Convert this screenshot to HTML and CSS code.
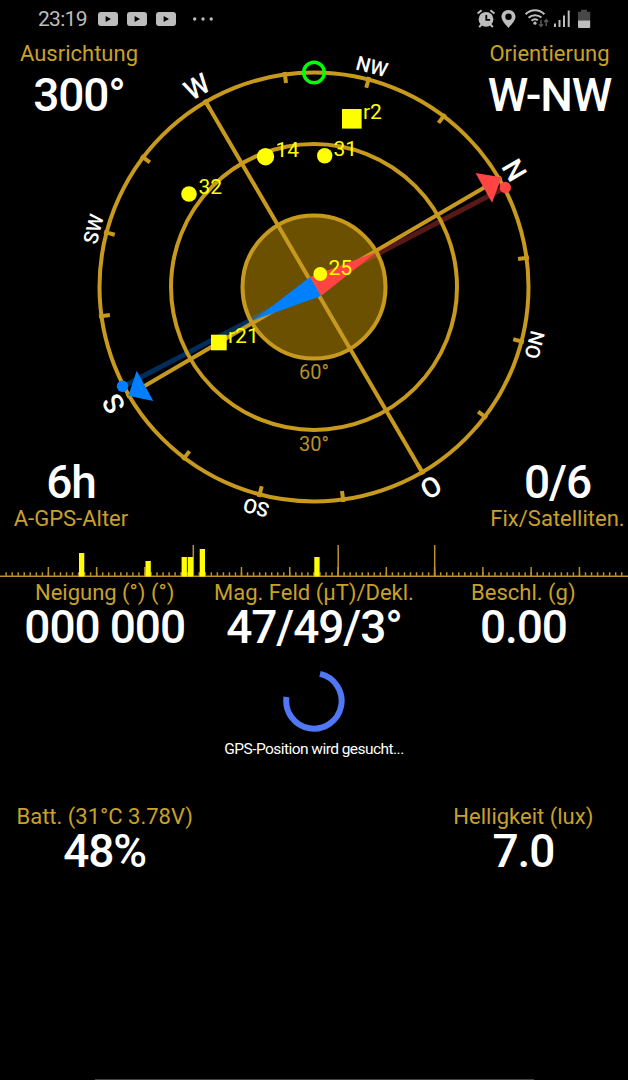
FILE: index.html
```html
<!DOCTYPE html>
<html lang="de">
<head>
    <meta charset="UTF-8">
    <meta name="viewport" content="width=device-width, initial-scale=1.0">
    <title>GPS Status</title>
    <link rel="stylesheet" href="styles.css">
</head>
<body>
    <header class="status-bar">
        <span class="clock">23:19</span>
        <div class="notifications">
            <svg class="video" viewBox="0 0 20 14"><rect width="20" height="14" rx="3"/><path class="cut" d="M7.6 4v6l5.4-3z"/></svg>
            <svg class="video" viewBox="0 0 20 14"><rect width="20" height="14" rx="3"/><path class="cut" d="M7.6 4v6l5.4-3z"/></svg>
            <svg class="video" viewBox="0 0 20 14"><rect width="20" height="14" rx="3"/><path class="cut" d="M7.6 4v6l5.4-3z"/></svg>
            <svg class="more" viewBox="0 0 20 4"><circle cx="1.7" cy="2" r="1.7"/><circle cx="10" cy="2" r="1.7"/><circle cx="18.2" cy="2" r="1.7"/></svg>
        </div>
        <svg class="system" viewBox="476 8 116 22">
            <!-- alarm -->
            <circle cx="486" cy="19.3" r="7.4"/>
            <path class="line" d="M477.6 13.6l4-3.4M494.4 13.6l-4-3.4"/>
            <path class="line" d="M481.5 24.5l-2.3 2.7M490.5 24.5l2.3 2.7"/>
            <path class="line cut-line" d="M486.3 15v4.8h3.8"/>
            <!-- location -->
            <path fill-rule="evenodd" d="M508.5 10c-4.2 0-7 3-7 6.8 0 4.3 4.6 8 7 11.2 2.4-3.2 7-6.9 7-11.2 0-3.8-2.8-6.8-7-6.8zm0 3.6a3.2 3.2 0 1 1 0 6.4 3.2 3.2 0 0 1 0-6.4z"/>
            <!-- wifi -->
            <path class="line" d="M525.6 14.3c5.3-5.300 13.500-5.300 18.800 0M528.600 17.800c3.600-3.500 9.200-3.500 12.800-.3M531.600 20.700c2-1.800 4.400-1.800 6.200-.4"/>
            <circle cx="535" cy="23.2" r="1.6"/>
            <path class="traffic" d="M541 20v6.3M539 24.2l2 2.2 2-2.2M546.2 26v-6.300M544.200 21.900l2-2.200 2 2.200"/>
            <!-- signal -->
            <path d="M554 23.5h2v3.500h-2zM558.500 20h2v7h-2zM563 15.500h2v11.500h-2zM567.700 10.500h2v16.500h-2z"/>
            <!-- battery -->
            <path class="empty" d="M581 9.700h6v2h3.200v9h-12.200v-9h3z"/>
            <path d="M578 20.500h12.200v6.500q0 1-1 1h-10.200q-1 0-1-1z"/>
        </svg>
    </header>

    <main>
        <section class="sky">
            <svg class="compass" viewBox="0 38 628 500">
                <g transform="translate(314 287)">
                    <circle class="zenith" r="71.5"/>
                    <path class="axis" d="M0-216V216M-216 0H216" transform="rotate(59.7)"/>
                    <!-- magnetic north / south -->
                    <path class="mag north-line" d="M0 0L191-99.5"/>
                    <path class="mag south-line" d="M0 0L-191 99.5"/>
                    <circle class="ring" r="71.5"/>
                    <circle class="ring" r="143"/>
                    <circle class="ring" r="214.5"/>
                    <g class="ticks" transform="rotate(59.7)">
                        <path d="M0-217v11M0 217v-11M-217 0h11M217 0h-11"/>
                        <path transform="rotate(22.5)" d="M0-217v11M0 217v-11M-217 0h11M217 0h-11"/>
                        <path transform="rotate(45)" d="M0-217v11M0 217v-11M-217 0h11M217 0h-11"/>
                        <path transform="rotate(67.5)" d="M0-217v11M0 217v-11M-217 0h11M217 0h-11"/>
                    </g>
                    <g class="cardinal">
                        <text transform="rotate(59.7)" y="-222">N</text>
                        <text transform="rotate(149.7)" y="-222">O</text>
                        <text transform="rotate(239.7)" y="-222">S</text>
                        <text transform="rotate(329.7)" y="-222">W</text>
                    </g>
                    <g class="intercardinal">
                        <text transform="rotate(104.7)" y="-221">NO</text>
                        <text transform="rotate(194.7)" y="-221">SO</text>
                        <text transform="rotate(284.7)" y="-221">SW</text>
                        <text transform="rotate(14.7)" y="-221">NW</text>
                    </g>
                    <text class="elevation" y="92">60°</text>
                    <text class="elevation" y="163.5">30°</text>
                    <path class="north" d="M-4-10L7 9 62.5-35z"/>
                    <path class="south" d="M-4-10L7 9-60 33z"/>
                    <path class="north" d="M161.5-114l26.2 4.3-9.7 25.4z"/>
                    <path class="south" d="M-177.3 83.7l16.6 30.3-25-5.3z"/>
                    <circle class="north" cx="191.3" cy="-99.5" r="5.7"/>
                    <circle class="south" cx="-191.5" cy="99.3" r="5.7"/>
                    <circle class="heading" cy="-214.5" r="10.3"/>
                </g>
                <g class="satellites">
                    <rect x="342" y="109" width="19.6" height="19.6"/><text x="363" y="118.5">r2</text>
                    <circle cx="265.5" cy="156.7" r="8.7"/><text x="275.5" y="157">14</text>
                    <circle cx="324.7" cy="155.7" r="7.7"/><text x="333.5" y="156">31</text>
                    <circle cx="189" cy="194" r="7.8"/><text x="198.5" y="194.3">32</text>
                    <circle cx="320.3" cy="274" r="6.9"/><text x="328.5" y="274.5">25</text>
                    <rect x="211" y="334.7" width="15.7" height="15.6"/><text x="228" y="342.8">r21</text>
                </g>
            </svg>
            <div class="readout corner-heading">
                <span class="label">Ausrichtung</span>
                <span class="value">300°</span>
            </div>
            <div class="readout corner-orientation">
                <span class="label">Orientierung</span>
                <span class="value">W-NW</span>
            </div>
            <div class="readout corner-age">
                <span class="value">6h</span>
                <span class="label">A-GPS-Alter</span>
            </div>
            <div class="readout corner-fix">
                <span class="value">0/6</span>
                <span class="label">Fix/Satelliten.</span>
            </div>
        </section>

        <svg class="signals" viewBox="0 538 628 41">
            <path class="minor" d="M5.4 574H625"/>
            <path class="major" d="M47.6 571.5H625"/>
            <path class="marker" d="M193.3 545v31M338.2 545v31M434.7 545v31"/>
            <path class="base" d="M0 576.2H628"/>
            <path class="bars" d="M79 553h5.3v23.5H79zM145.500 561h5.300v15.500h-5.300zM181.600 557h5.300v19.500h-5.300zM187.700 557h5.300v19.500h-5.300zM199.700 549h5.300v27.500h-5.300zM314.300 557h5.300v19.500h-5.300z"/>
        </svg>

        <section class="row">
            <div class="readout">
                <span class="label">Neigung (°) (°)</span>
                <span class="value">000 000</span>
            </div>
            <div class="readout">
                <span class="label">Mag. Feld (µT)/Dekl.</span>
                <span class="value">47/49/3°</span>
            </div>
            <div class="readout">
                <span class="label">Beschl. (g)</span>
                <span class="value">0.00</span>
            </div>
        </section>

        <section class="searching">
            <svg class="spinner" viewBox="0 0 62 62"><path d="M37 3.9A27.700 27.700 0 1 1 3.500 27"/></svg>
            <p>GPS-Position wird gesucht...</p>
        </section>

        <section class="row">
            <div class="readout">
                <span class="label">Batt. (31°C 3.78V)</span>
                <span class="value">48%</span>
            </div>
            <div></div>
            <div class="readout">
                <span class="label">Helligkeit (lux)</span>
                <span class="value">7.0</span>
            </div>
        </section>
    </main>
    <footer class="gesture-line"></footer>
</body>
</html>
```
FILE: styles.css
```css
* {
    box-sizing: border-box;
}
body {
    display: flex;
    flex-direction: column;
    height: 1080px;
    margin: 0;
    overflow: hidden;
    background: #000;
    color: #fff;
    font-family: Roboto, sans-serif;
}
main {
    flex: 1;
}
svg {
    display: block;
}

/* status bar */
.status-bar {
    display: flex;
    align-items: center;
    height: 38px;
    padding: 0 36px 0 38px;
    color: #bdbdbd;
    fill: #bdbdbd;
}
.clock {
    width: 60px;
    font-size: 21px;
    letter-spacing: -0.7px;
}
.notifications {
    display: flex;
    align-items: center;
    gap: 9px;
    flex: 1;
}
.video {
    width: 20px;
    height: 14px;
}
.more {
    width: 20px;
    height: 4px;
    margin-left: 8px;
}
.cut {
    fill: #000;
}
.system {
    width: 116px;
    height: 22px;
}
.line {
    fill: none;
    stroke: #bdbdbd;
    stroke-width: 2;
}
.cut-line {
    stroke: #000;
    stroke-width: 1.8;
}
.traffic {
    fill: none;
    stroke: #555;
    stroke-width: 1.5;
}
.empty {
    fill: #484848;
}

/* readouts */
.readout {
    display: flex;
    flex-direction: column;
    align-items: center;
    white-space: nowrap;
}
.label {
    color: #c9a02a;
    font-size: 22px;
    line-height: 28px;
}
.value {
    font-size: 46px;
    font-weight: 500;
    line-height: 46px;
    letter-spacing: -1.1px;
}

/* compass with readouts in its corners */
.sky {
    display: grid;
    grid-template-columns: 1fr 1fr;
    grid-template-rows: 1fr 1fr;
    height: 500px;
}
.compass {
    grid-area: 1 / 1 / 3 / 3;
    width: 628px;
    height: 500px;
}
.corner-heading {
    grid-area: 1 / 1;
    width: 158px;
    padding-top: 2px;
    gap: 4px;
}
.corner-orientation {
    grid-area: 1 / 2;
    justify-self: end;
    width: 157px;
    padding-top: 2px;
    gap: 4px;
}
.corner-age {
    grid-area: 2 / 1;
    align-self: end;
    width: 142px;
    padding-bottom: 5px;
}
.corner-fix {
    grid-area: 2 / 2;
    place-self: end;
    width: 141px;
    padding-bottom: 5px;
}
.zenith {
    fill: #6a5000;
}
.ring, .axis, .ticks {
    fill: none;
    stroke: #c79a1e;
    stroke-width: 4;
}
.mag {
    stroke-width: 5;
}
.north-line {
    stroke: rgba(255, 68, 68, 0.35);
}
.south-line {
    stroke: rgba(0, 128, 255, 0.35);
}
.north {
    fill: #ff4444;
}
.south {
    fill: #0080ff;
}
.heading {
    fill: none;
    stroke: #00ff00;
    stroke-width: 3.5;
}
.cardinal {
    fill: #fff;
    font-size: 28px;
    font-weight: 500;
    text-anchor: middle;
}
.intercardinal {
    fill: #fff;
    font-size: 20px;
    font-weight: 500;
    text-anchor: middle;
}
.elevation {
    fill: #b98f28;
    font-size: 20px;
    text-anchor: middle;
}
.satellites {
    fill: #ffff00;
    font-size: 21px;
}

/* signal strength ruler */
.signals {
    width: 628px;
    height: 41px;
}
.base, .minor, .major, .marker {
    fill: none;
    stroke: #b8922e;
    stroke-width: 1.5;
}
.minor {
    stroke-width: 3.5;
    stroke-dasharray: 1.5 4.535;
}
.major {
    stroke-width: 9;
    stroke-dasharray: 1.5 46.78;
}
.bars {
    fill: #ffff00;
}

.row {
    display: grid;
    grid-template-columns: repeat(3, 1fr);
}
.row .value {
    margin-top: -3px;
}

/* GPS search */
.searching {
    display: flex;
    flex-direction: column;
    align-items: center;
    height: 153px;
    padding-top: 19.5px;
}
.spinner {
    width: 62px;
    height: 62px;
    fill: none;
    stroke: #5077f5;
    stroke-width: 6;
}
.searching p {
    margin: 7px 0 0;
    font-size: 15.5px;
    line-height: 20px;
    letter-spacing: -0.55px;
}

.gesture-line {
    width: 439px;
    height: 1px;
    margin-left: 95px;
    background: #444;
}
```
